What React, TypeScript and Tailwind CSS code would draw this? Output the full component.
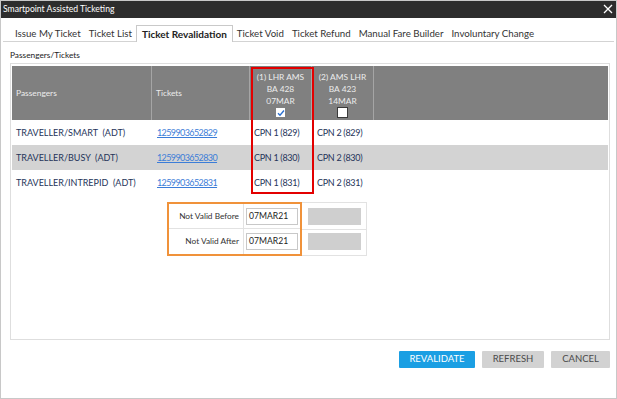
import React from "react";

const rows = [
  { name: "TRAVELLER/SMART  (ADT)", ticket: "1259903652829", c1: "CPN 1 (829)", c2: "CPN 2 (829)", gray: false },
  { name: "TRAVELLER/BUSY  (ADT)", ticket: "1259903652830", c1: "CPN 1 (830)", c2: "CPN 2 (830)", gray: true },
  { name: "TRAVELLER/INTREPID  (ADT)", ticket: "1259903652831", c1: "CPN 1 (831)", c2: "CPN 2 (831)", gray: false },
];

const tabs = ["Issue My Ticket", "Ticket List", "Ticket Revalidation", "Ticket Void", "Ticket Refund", "Manual Fare Builder", "Involuntary Change"];

export default function App() {
  return (
    <div
      className="w-[617px] h-[399px] border border-[#c8c8c8] bg-white flex flex-col text-[9px] overflow-hidden"
      style={{ fontFamily: "Lato, 'Liberation Sans', sans-serif" }}
    >
      {/* Title bar */}
      <div className="h-[18px] bg-[#2d2d2d] flex items-center justify-between pl-[3px] pr-[2px] shrink-0 -mx-px -mt-px">
        <span className="text-white text-[8.6px]">Smartpoint Assisted Ticketing</span>
        <svg width="10" height="10" viewBox="0 0 10 10" className="mr-[2px]">
          <path d="M1 1 L9 9 M9 1 L1 9" stroke="#ffffff" strokeWidth="1.3" />
        </svg>
      </div>

      {/* Tabs */}
      <div className="mt-[7px] mx-[2px] h-[17px] border-b border-[#d3d3d3] flex items-end pl-[8px] text-[#333] text-[9.7px]">
        {tabs.map((t) =>
          t === "Ticket Revalidation" ? (
            <div key={t} className="h-[17px] -mb-px px-[5px] border border-b-0 border-[#c9c9c9] bg-white flex items-center font-bold text-[#222] text-[10px]">
              {t}
            </div>
          ) : (
            <div key={t} className="h-[16px] px-[4px] flex items-center">
              {t}
            </div>
          )
        )}
      </div>

      {/* Section label */}
      <div className="ml-[9px] mt-[7px] h-[13px] flex items-center text-[#222] text-[8.3px]">Passengers/Tickets</div>

      {/* Panel */}
      <div className="ml-[9px] w-[600px] h-[277px] mt-[1px] border border-[#dedede] px-[1px] pt-[2px] flex flex-col">
        <div className="relative flex flex-col">
          {/* Header */}
          <div className="h-[54px] bg-[#808080] flex text-[#ececec] text-[8.4px]">
            <div className="w-[140px] border-r border-[#a5a5a5] flex items-center pl-[4px]">Passengers</div>
            <div className="w-[98px] border-r border-[#a5a5a5] flex items-center pl-[4px]">Tickets</div>
            <div className="w-[62px] border-r border-[#a5a5a5] flex flex-col items-center pt-[5px] leading-[12px]">
              <span>(1) LHR AMS</span>
              <span>BA 428</span>
              <span>07MAR</span>
              <div className="mt-[1px] w-[9px] h-[9px] bg-white flex items-center justify-center">
                <svg width="8" height="8" viewBox="0 0 8 8">
                  <path d="M1 4.2 L3 6.2 L7 1.5" stroke="#2a6fd0" strokeWidth="1.4" fill="none" />
                </svg>
              </div>
            </div>
            <div className="w-[62px] border-r border-[#a5a5a5] flex flex-col items-center pt-[5px] leading-[12px]">
              <span>(2) AMS LHR</span>
              <span>BA 423</span>
              <span>14MAR</span>
              <div className="mt-[0px] w-[11px] h-[11px] bg-white border-[1.5px] border-[#3a3a3a]" />
            </div>
            <div className="flex-1" />
          </div>

          {/* Rows */}
          {rows.map((r) => (
            <div key={r.ticket} className={`h-[25px] flex items-center text-[9px] text-[#25345a] ${r.gray ? "bg-[#d3d3d3]" : "bg-white"}`}>
              <div className="w-[141px] pl-[4px] whitespace-pre">{r.name}</div>
              <div className="w-[98px] pl-[4px]">
                <span className="text-[#3b7dd8] underline tracking-[-0.6px]">{r.ticket}</span>
              </div>
              <div className="w-[62px] pl-[3px] tracking-[-0.3px]">{r.c1}</div>
              <div className="w-[62px] pl-[4px] tracking-[-0.3px]">{r.c2}</div>
            </div>
          ))}

          {/* Red highlight annotation */}
          <div className="absolute left-[239px] top-[1px] w-[63px] h-[127px] border-2 border-[#e30000] pointer-events-none" />
        </div>

        {/* Validity table */}
        <div className="ml-[155px] mt-[7px] flex text-[8.3px]">
          <div className="w-[135px] h-[54px] border-2 border-[#f0923a] flex flex-col">
            {[
              "Not Valid Before",
              "Not Valid After",
            ].map((l, i) => (
              <div key={l} className={`h-[25px] flex items-center ${i === 0 ? "border-b border-[#e2e2e2]" : ""}`}>
                <div className="w-[75px] h-full border-r border-[#e2e2e2] flex items-center justify-end pr-[4px] text-[#333]">{l}</div>
                <div className="flex-1 flex items-center pl-[2px]">
                  <div className="w-[52px] h-[17px] border border-[#c8c8c8] flex items-center pl-[2px] text-[#222] text-[8.6px]">07MAR21</div>
                </div>
              </div>
            ))}
          </div>
          <div className="w-[65px] h-[54px] flex flex-col border border-l-0 border-[#e2e2e2] py-[1px]">
            <div className="h-[26px] flex items-center pl-[6px] border-b border-[#e2e2e2]">
              <div className="w-[53px] h-[17px] bg-[#cfcfcf]" />
            </div>
            <div className="h-[25px] flex items-center pl-[6px]">
              <div className="w-[53px] h-[17px] bg-[#cfcfcf]" />
            </div>
          </div>
        </div>
      </div>

      {/* Buttons */}
      <div className="mt-[11px] mr-[6px] flex justify-end gap-[7px] text-[9.5px]">
        <button className="w-[76px] h-[17px] bg-[#1b9fe3] text-white rounded-[1px]">REVALIDATE</button>
        <button className="w-[62px] h-[17px] bg-[#d2d2d2] text-[#4a4a4a] rounded-[1px]">REFRESH</button>
        <button className="w-[59px] h-[17px] bg-[#d2d2d2] text-[#4a4a4a] rounded-[1px]">CANCEL</button>
      </div>
    </div>
  );
}
